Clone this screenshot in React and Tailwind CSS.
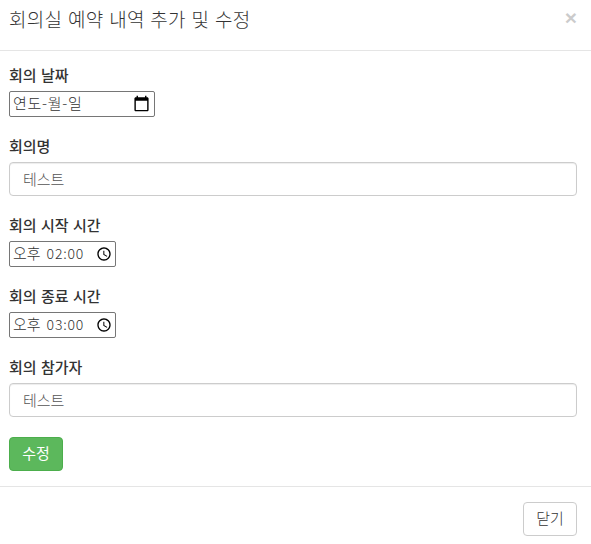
import React from "react";

const fields = [
    { label: "회의 날짜", type: "date", value: "연도-월-일" },
    { label: "회의명", type: "text", value: "테스트" },
    { label: "회의 시작 시간", type: "time", meridiem: "오후", value: "02:00" },
    { label: "회의 종료 시간", type: "time", meridiem: "오후", value: "03:00" },
    { label: "회의 참가자", type: "text", value: "테스트" },
];

function CalendarIcon() {
    return (
        <svg viewBox="0 0 24 24" className="w-[17px] h-[17px] shrink-0 -mt-[2px]" fill="black">
            <path d="M20 3h-1V1h-2v2H7V1H5v2H4c-1.1 0-2 .9-2 2v16c0 1.1.9 2 2 2h16c1.1 0 2-.9 2-2V5c0-1.1-.9-2-2-2zm0 18H4V8h16v13z" />
        </svg>
    );
}

function ClockIcon() {
    return (
        <svg viewBox="0 0 24 24" className="w-[16px] h-[16px] shrink-0 -mt-px" fill="black">
            <path d="M11.99 2C6.47 2 2 6.48 2 12s4.47 10 9.99 10C17.52 22 22 17.52 22 12S17.52 2 11.99 2zM12 20c-4.42 0-8-3.58-8-8s3.58-8 8-8 8 3.58 8 8-3.58 8-8 8z" />
            <path d="M12.5 7H11v6l5.25 3.15.75-1.23-4.5-2.67z" />
        </svg>
    );
}

function FieldBox({ field }) {
    if (field.type === "date") {
        return (
            <div className="w-[146px] h-[26px] border border-[#767676] rounded-[2px] flex items-center justify-between pl-[3px] pr-[4px] font-light">
                <span className="tracking-[0.7px] -mt-[2px]">{field.value}</span>
                <CalendarIcon />
            </div>
        );
    }

    if (field.type === "time") {
        return (
            <div className="w-[107px] h-[26px] border border-[#767676] rounded-[2px] flex items-center justify-between pl-[3px] pr-[3px] font-light">
                <span className="flex gap-[6px] -mt-[2px]">
                    <span>{field.meridiem}</span>
                    <span className="text-[14px] tracking-[0.8px]">{field.value}</span>
                </span>
                <ClockIcon />
            </div>
        );
    }

    return (
        <div className="h-[34px] border border-[#cccccc] rounded-[4px] flex items-center pl-[13px] pr-3 font-light text-[#555555] shadow-[inset_0_1px_1px_rgba(0,0,0,0.075)]">
            {field.value}
        </div>
    );
}

export default function App() {
    return (
        <div className="w-full h-[544px] bg-white overflow-hidden font-['Noto_Sans_CJK_KR',sans-serif] text-[15px] leading-[20px] text-[#333333]">
            <div className="h-[51px] border-b border-[#e5e5e5] flex items-start justify-between pl-[9px] pr-[14px]">
                <h4 className="text-[19px] leading-[26px] font-light tracking-[0.25px] [word-spacing:1.3px] mt-[6px]">
                    회의실 예약 내역 추가 및 수정
                </h4>
                <button className="font-['Liberation_Sans',sans-serif] text-[21px] leading-[21px] font-bold text-black opacity-20 mt-[7px]">
                    ×
                </button>
            </div>

            <div className="pt-[14px] pb-[15px] pl-[9px] pr-[14px] flex flex-col items-stretch gap-[19px]">
                {fields.map((field) => (
                    <div key={field.label}>
                        <label className="block mb-[6px] font-medium [word-spacing:1px]">
                            {field.label}
                        </label>
                        <FieldBox field={field} />
                    </div>
                ))}
                <button className="self-start w-[54px] h-[34px] mt-px pb-[3px] rounded-[4px] border border-[#4cae4c] bg-[#5cb85c] text-white">
                    수정
                </button>
            </div>

            <div className="border-t border-[#e5e5e5] pt-[15px] pr-[14px] flex justify-end">
                <button className="w-[54px] h-[34px] pb-[3px] rounded-[4px] border border-[#cccccc] bg-white font-light">
                    닫기
                </button>
            </div>
        </div>
    );
}
